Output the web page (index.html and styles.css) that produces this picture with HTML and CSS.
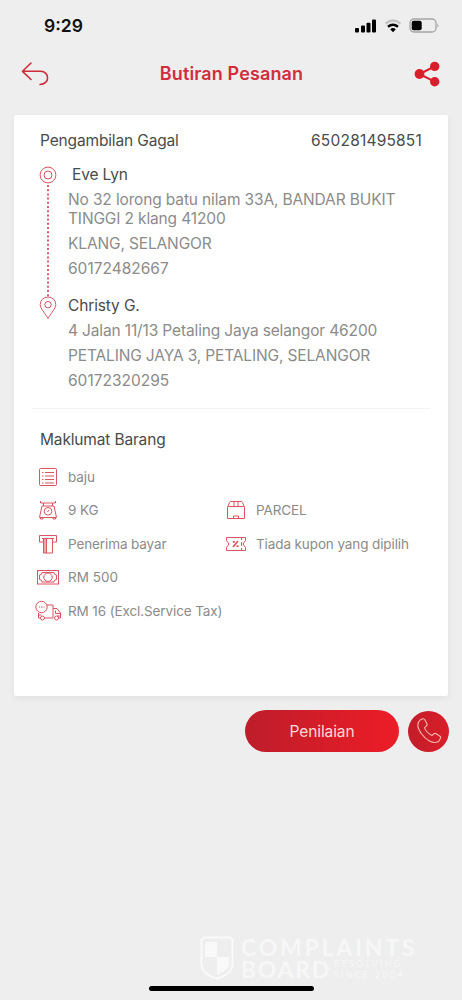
FILE: index.html
```html
<!DOCTYPE html>
<html lang="ms">
<head>
<meta charset="utf-8">
<title>Butiran Pesanan</title>
<link rel="stylesheet" href="styles.css">
</head>
<body>
<div class="screen">
  <div class="status">
    <span class="time">9:29</span>
    <svg class="signal" width="22" height="14" viewBox="0 0 22 14"><rect x="0" y="9" width="4" height="4.500" rx="1"/><rect x="6" y="6.500" width="4" height="7" rx="1"/><rect x="11.500" y="3.700" width="4" height="9.800" rx="1"/><rect x="17" y="0.500" width="4" height="13" rx="1"/></svg>
    <svg class="wifi" width="18" height="14" viewBox="0 0 18 14" fill="none"><path d="M1.500 4.600Q9-1.700 16.500 4.600" stroke="#c4c4c4" stroke-width="2.300"/><path d="M4 7.800Q9 3.600 14 7.800" stroke="#000" stroke-width="2.500"/><path d="M6.200 10.200Q9 8 11.800 10.200L9 13.200Z" fill="#000"/></svg>
    <svg class="battery" width="31" height="15" viewBox="0 0 31 15"><rect x="1" y="1" width="26" height="13" rx="4" fill="none" stroke="#a5a5a5" stroke-width="1.300"/><rect x="2.700" y="2.700" width="10" height="9.600" rx="2" fill="#000"/><path d="M28.500 5.200Q30.300 7.500 28.500 9.800Z" fill="#999"/></svg>
  </div>
  <div class="nav">
    <svg width="28" height="26" viewBox="0 0 28 26" fill="none" stroke="#cf2c39" stroke-width="1.600" stroke-linecap="round" stroke-linejoin="round"><path d="M10 2L1.500 10.300L10 18.500M1.500 10.300H19.500C29 10.300 29 23.500 19 23.500"/></svg>
    <h1 class="nav-title">Butiran Pesanan</h1>
    <svg width="26" height="26" viewBox="0 0 26 26" fill="#d8202c"><path d="M20.500 5.500L5.500 13L20.500 20.700" fill="none" stroke="#d8202c" stroke-width="2"/><circle cx="5.500" cy="13" r="4.900"/><circle cx="20.700" cy="5.400" r="4.700"/><circle cx="20.700" cy="20.800" r="4.700"/></svg>
  </div>

  <div class="card">
    <div class="card-head"><span class="state">Pengambilan Gagal</span><span class="number">650281495851</span></div>
    <div class="route">
      <div class="track">
        <svg width="18" height="18" viewBox="0 0 18 18" fill="none" stroke="#d85562"><circle cx="9" cy="9" r="7.900"/><circle cx="9" cy="9" r="4"/></svg>
        <svg class="dots" width="4" height="114" viewBox="0 0 4 114"><path d="M2 1V113" stroke="#d33745" stroke-width="1.600" stroke-dasharray="2 2.200"/></svg>
        <svg width="18" height="24" viewBox="0 0 18 24" fill="none" stroke="#d85562"><path d="M9 22.500C6 17 1.200 12.500 1.200 8.600A7.800 7.600 0 0 1 16.800 8.600C16.800 12.500 12 17 9 22.500Z"/><circle cx="9" cy="8.700" r="3.200"/></svg>
      </div>
      <div class="stops">
        <div class="stop">
          <div class="name sender">Eve Lyn</div>
          <p class="addr">No 32 lorong batu nilam 33A, BANDAR BUKIT<br>TINGGI 2 klang 41200</p>
          <p class="addr">KLANG, SELANGOR</p>
          <p class="addr phone">60172482667</p>
        </div>
        <div class="stop">
          <div class="name">Christy G.</div>
          <p class="addr">4 Jalan 11/13 Petaling Jaya selangor 46200</p>
          <p class="addr">PETALING JAYA 3, PETALING, SELANGOR</p>
          <p class="addr phone">60172320295</p>
        </div>
      </div>
    </div>
    <div class="rule"></div>
    <h2 class="section">Maklumat Barang</h2>
    <div class="items">
      <div class="item wide"><svg width="28" height="22" viewBox="0 0 28 22"><rect x="5.500" y="2.500" width="17" height="17" rx="1"/><path d="M8 6.500h1.500M8 10h1.500M8 13.500h1.500M8 17h1.500M11 6.500h9M11 10h9M11 13.500h9M11 17h9"/></svg><span>baju</span></div>
      <div class="item"><svg width="28" height="22" viewBox="0 0 28 22"><path d="M6.500 2v2h15V2M9.500 4v3M18.500 4v3M8 7h12l2.500 11.500h-17ZM6.500 18.500v1.500h2.500v-1.500M19 18.500v1.500h2.500v-1.500"/><circle cx="14" cy="12.300" r="3.800"/><path d="M13.500 13l1.500-2"/></svg><span>9 KG</span></div>
      <div class="item"><svg width="28" height="22" viewBox="0 0 28 22"><path d="M5.500 8.500L7.500 3.500q.3-1 1.300-1h10.400q1 0 1.300 1l2 5M5.500 8.500v11h17v-11q0-1-1-1h-15q-1 0-1 1M12 2.500V7.500M16 2.500V7.500M11.500 19.500V17h5v2.500"/></svg><span>PARCEL</span></div>
      <div class="item"><svg width="28" height="22" viewBox="0 0 28 22"><path d="M9 9H5.500V2.500h17V9H19M8 5.500h12M9.500 5.500v14.500h9v-14.500M12.500 5.500v14.500M11 5.500v14.500"/></svg><span>Penerima bayar</span></div>
      <div class="item"><svg width="28" height="22" viewBox="0 0 28 22"><path d="M4.500 4.500h19v3l-2.500 3.500l2.500 3.500v3h-19v-3l2.500-3.500l-2.500-3.500ZM19.500 5v2M19.500 9v4M19.500 15v2"/><path class="bold" d="M11 14l5-6M10.800 8.800h2M14.500 13.200h2"/></svg><span>Tiada kupon yang dipilih</span></div>
      <div class="item wide"><svg width="28" height="22" viewBox="0 0 28 22"><rect x="3.500" y="4.500" width="21" height="13.500"/><path d="M8 6.500h12q0 2.500 2.500 2.500v4.500q-2.500 0-2.500 2.500H8q0-2.500-2.500-2.500V9Q8 9 8 6.500Z"/><circle cx="14" cy="11.200" r="4.200"/><path d="M9 11h.5M18.500 11h.5"/></svg><span class="rm">RM 500</span></div>
      <div class="item wide"><svg width="28" height="22" viewBox="0 0 28 22"><circle cx="7.500" cy="7" r="5.700"/><path d="M5 7h1M7 7h1.500M9.500 7h1M13 5h6v13M4.500 13v5h2M10.500 18h8.500M19 8.500h4l3.500 4.500v5h-2M21.500 10.500v3h5M4.500 15h3M23 16h3"/><circle cx="8.500" cy="18" r="2"/><circle cx="22.500" cy="18" r="2"/></svg><span>RM 16 (Excl.Service Tax)</span></div>
    </div>
  </div>

  <div class="actions">
    <div class="rate">Penilaian</div>
    <div class="call"><svg width="28" height="28" viewBox="0 0 28 28" fill="none" stroke="#ffb5ac" stroke-width="1.100" stroke-linejoin="round"><path d="M5.500 2.700L8 1.800Q9.200 1.600 10 3L12 7Q12.400 8.200 11.300 9.100L9.500 10.600C10.400 13.500 13.700 16.900 17 18.500L19 16.700Q20 16 21.200 16.700L25 19.200Q26 20 25.500 21.200L23.700 24.400C18 27.700 10.500 22.500 6.500 16.800C2.600 11.500 1.500 6 5.500 2.700Z"/></svg></div>
  </div>

  <div class="footer">
    <div class="mark">
      <svg width="34" height="44" viewBox="0 0 34 44"><path d="M4 1.500H30L32.500 4V28Q32.500 38 17 42.500Q1.500 38 1.500 28V4Z" fill="none" stroke="#fafafa" stroke-width="2"/><path d="M7 6h10v15H5V8ZM17 21h12v7q0 6-12 11Z" fill="#f9f9f9"/></svg>
      <div class="words"><div class="w1">COMPLAINTS</div><div class="second"><span class="w2">BOARD</span><span class="w3"><span>RESOLVING</span><span>SINCE 2004</span></span></div></div>
    </div>
    <div class="home"></div>
  </div>
</div>
</body>
</html>
```
FILE: styles.css
```css
* { box-sizing: border-box; }
body { margin: 0; background: #eee; font-family: Inter, "Liberation Sans", sans-serif; }
h1, h2, p { margin: 0; font-weight: 400; }
svg { flex: none; display: block; }
.screen { width: 462px; height: 1000px; display: flex; flex-direction: column; overflow: hidden; }
.status { height: 50px; display: flex; align-items: center; padding: 1px 22px 0 44px; }
.time { font-size: 17.500px; font-weight: 600; color: #111; margin-right: auto; }
.signal { margin-right: 7px; }
.wifi { margin-right: 7px; }
.nav { height: 48px; display: flex; align-items: center; justify-content: space-between; padding: 0 22px 0 21px; }
.nav-title { font-size: 18px; line-height: 22px; font-weight: 600; letter-spacing: .13px; color: #cf2f3c; }
.card { margin: 17px 14px 0; height: 581px; background: #fff; border-radius: 2px; box-shadow: 0 2px 7px rgba(0,0,0,.06); padding: 16px 17px 0; }
.card-head { display: flex; justify-content: space-between; line-height: 20px; font-size: 15.500px; color: #4b4b4b; padding: 0 9px; }
.state { letter-spacing: -.15px; }
.number { letter-spacing: .2px; }
.route { display: flex; padding: 13px 0 0 8px; height: 257px; }
.track { width: 18px; display: flex; flex-direction: column; align-items: center; padding-top: 2px; margin-right: 11px; }
.dots { margin-bottom: -2px; }
.stop { height: 131px; }
.name { line-height: 20px; margin-bottom: 5px; font-size: 15.500px; letter-spacing: -.13px; color: #4b4b4b; padding-top: 1px; }
.sender { padding-left: 4px; }
.addr { line-height: 19px; margin-bottom: 6.200px; font-size: 15.500px; letter-spacing: -.14px; color: #8b8b8b; white-space: nowrap; }
.phone { letter-spacing: 0; }
.rule { border-top: 1px solid #f4f4f4; margin: 0 1px; }
.section { font-size: 15.500px; line-height: 20px; letter-spacing: -.16px; color: #4b4b4b; margin: 21px 9px 10px; }
.items { display: grid; grid-template-columns: 188px 1fr; grid-auto-rows: 33.500px; padding-left: 3px; }
.item { display: flex; align-items: center; gap: 6px; font-size: 13.500px; letter-spacing: -.11px; color: #8b8b8b; white-space: nowrap; }
.item svg { fill: none; stroke: #d95561; stroke-width: 1; }
.item .bold { stroke-width: 1.700; }
.rm { letter-spacing: 0; }
.wide { grid-column: 1 / 3; }
.actions { display: flex; gap: 9px; justify-content: flex-end; align-items: center; padding: 14px 13px 0 0; }
.rate { width: 154px; height: 42px; border-radius: 21px; background: linear-gradient(90deg, #bd1d2b, #ec1d27); color: #fbd9d5; font-size: 15.500px; letter-spacing: -.1px; display: flex; align-items: center; justify-content: center; }
.call { width: 41px; height: 41px; border-radius: 50%; background: linear-gradient(90deg, #c21d2a, #d91f2a); display: flex; align-items: center; justify-content: center; }
.footer { margin-top: auto; height: 64px; display: flex; flex-direction: column; justify-content: space-between; padding-bottom: 9px; }
.mark { display: flex; height: 44px; padding-left: 200px; gap: 7px; color: #f7f7f7; font-family: Lato, sans-serif; font-weight: 700; }
.w1 { font-size: 23px; line-height: 22px; letter-spacing: 2.800px; }
.second { display: flex; gap: 3px; }
.w2 { font-size: 23px; line-height: 23px; letter-spacing: 1.700px; }
.w3 { display: flex; flex-direction: column; font-size: 9px; line-height: 11px; letter-spacing: 2.200px; font-weight: 400; white-space: nowrap; }
.home { width: 165px; height: 5px; border-radius: 3px; background: #000; margin-left: 149px; flex: none; }
```
